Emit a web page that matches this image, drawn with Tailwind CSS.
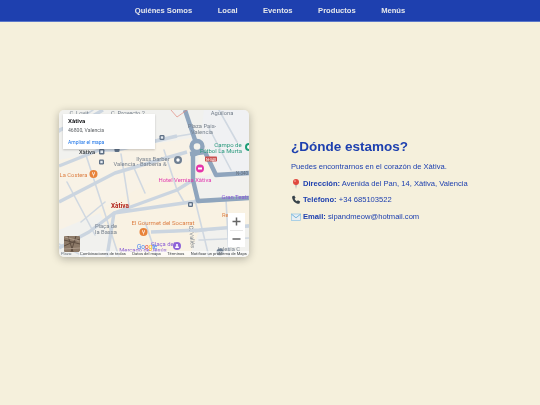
<!DOCTYPE html>
<html lang="es">
<head>
<meta charset="utf-8">
<title>Sip and Meow</title>
<script src="https://cdn.jsdelivr.net/npm/@tailwindcss/browser@4"></script>
</head>
<body class="bg-[#f5f0dc] font-['Liberation_Sans',Arial,sans-serif] text-[#1e40af] h-[405px] overflow-hidden">
  <nav class="h-[22px] bg-[#1e40af] border-b border-[#5b78c9]">
    <ul class="h-full flex justify-center items-center gap-[25.5px] text-[7.6px] font-bold text-[#e5e7eb] blur-[0.25px]">
      <li><a href="#">Quiénes Somos</a></li>
      <li><a href="#">Local</a></li>
      <li><a href="#">Eventos</a></li>
      <li><a href="#">Productos</a></li>
      <li><a href="#">Menús</a></li>
    </ul>
  </nav>

  <main class="flex items-center pl-[59px] pt-[88px]">
    <!-- map -->
    <div class="relative w-[190px] h-[147px] rounded-[5px] overflow-hidden shadow-[0_2px_8px_rgba(0,0,0,0.28)] shrink-0">
      <svg class="absolute inset-0 blur-[0.35px]" width="190" height="147" viewBox="0 0 190 147" font-family="Roboto, sans-serif">
        <rect width="190" height="147" fill="#f1f1ee"/>
        <!-- built up blocks -->
        <path d="M0 50L42 42L132 28V70L60 95L0 120Z" fill="#f8f2e6"/>
        <path d="M40 100L132 50L138 88L190 90V115L140 122L130 147H60Z" fill="#f9f2e3"/>
        <path d="M140 45L150 45L158 62L136 68Z" fill="#f9f4e9"/>
        <path d="M145 0H190V60L160 62L142 25Z" fill="#f0f1f3"/>
        <!-- minor streets -->
        <g fill="none" stroke="#d0d8e1" stroke-width="1.6" stroke-linecap="round">
          <path d="M26 42L60 147M8 72L36 125M62 44L70 95M105 40L118 80L125 92M75 58L86 83M136 90L150 147M167 89L170 147M110 122L136 120M22 112L46 92M86 112L98 147M0 22L34 0M96 30L132 24M150 18L172 60M160 0L178 32M136 122L190 115M140 130L190 128M0 134L26 147"/>
        </g>
        <!-- secondary roads -->
        <g fill="none" stroke="#cbd5e0" stroke-width="3.4" stroke-linejoin="round">
          <path d="M0 92L56 63L100 50L128 42"/>
          <path d="M0 138L30 122L55 103L132 92L190 88"/>
          <path d="M55 103L118 80L134 70"/>
          <path d="M0 56L40 40L58 40L118 26"/>
          <path d="M55 103L48 147"/>
          <path d="M92 122L140 120L190 116"/>
          <path d="M0 20L30 8L44 0"/>
        </g>
        <!-- main avenue -->
        <g fill="none" stroke="#8fa5bd" stroke-width="4.4" stroke-linejoin="round">
          <path d="M126 0L136 30"/>
          <path d="M138 43L134 45L134 70L139 91L190 88"/>
          <path d="M146 42L157 65L190 63"/>
          <circle cx="138" cy="36.500" r="5.500" fill="#f6f4ec"/>
          <path d="M131 44L146 42"/>
        </g>
        <path d="M112 0L118 7L128 0" fill="none" stroke="#e28b80" stroke-width="0.7"/>
        <!-- labels -->
        <g font-size="5.8" fill="#78828e" text-anchor="middle">
          <text x="20" y="4.500">C. Lovit</text>
          <text x="69" y="4.500">C. Proyecto 2</text>
          <text x="163" y="4.500">Aguilona</text>
          <text x="143" y="18">Plaza Pais-</text>
          <text x="143" y="24">Valencia</text>
          <text x="94" y="50.500">Ilyass Barber</text>
          <text x="81" y="56">Valencia - Barbería &amp;</text>
          <text x="47" y="118">Plaça de</text>
          <text x="47" y="123.500">la Bassa</text>
          <text x="170" y="140.500">Iglesia C</text>
          <text x="131" y="127" transform="rotate(85 131 127)">C. Vallés</text>
        </g>
        <g text-anchor="middle">
          <text x="28" y="43.500" font-size="5.800" font-weight="500" fill="#3c4043">Xàtiva</text>
          <text x="61" y="98" font-size="6.400" font-weight="700" fill="#b3261e">Xàtiva</text>
          <text x="169" y="37" font-size="6" fill="#2b9a7e">Campo de</text>
          <text x="162" y="42.800" font-size="6" fill="#2b9a7e">Fútbol La Murta</text>
          <text x="14.500" y="67" font-size="5.800" fill="#dd8146">La Costera</text>
          <text x="104" y="114.500" font-size="6" fill="#dd8146">El Gourmet del Socarrat</text>
          <text x="172" y="107" font-size="5.800" fill="#dd8146">Restau</text>
          <text x="126" y="72" font-size="5.900" fill="#e23aae">Hotel Vernisa Xàtiva</text>
          <text x="176" y="89" font-size="5.900" fill="#8b5fd6">Gran Teatr</text>
          <text x="84" y="142" font-size="5.800" fill="#8b5fd6">Mercado de Jesús</text>
          <text x="104" y="136" font-size="5.800" fill="#8b5fd6">Glaça del</text>
          <text x="189" y="64.800" font-size="4.500" fill="#67727f" text-anchor="end">N-340</text>
        </g>
        <!-- pins -->
        <g>
          <circle cx="34.500" cy="64" r="4" fill="#e8833a"/>
          <circle cx="84.500" cy="122" r="4" fill="#e8833a"/>
          <path d="M33.500 62v2.200h2v-2.200M34.500 64v2.500M83.500 120v2.200h2v-2.200M84.500 122v2.500" fill="none" stroke="#fff" stroke-width="0.6"/>
          <circle cx="141" cy="58.500" r="4" fill="#e535ab"/>
          <rect x="139" y="57.500" width="4" height="2" fill="#fff"/>
          <circle cx="118" cy="136" r="4" fill="#8e63d8"/>
          <circle cx="118" cy="135" r="1.100" fill="#fff"/>
          <path d="M116 138a2 2 0 0 1 4 0z" fill="#fff"/>
          <circle cx="119" cy="50" r="4" fill="#6f7f92"/>
          <circle cx="119" cy="50" r="1.700" fill="#fff"/>
          <circle cx="190" cy="37" r="4" fill="#1f9d78"/>
          <circle cx="190" cy="37" r="2" fill="#fff"/>
          <circle cx="161" cy="142" r="3.500" fill="#6f7f92"/>
        </g>
        <!-- transit stops -->
        <g fill="#5f7186">
          <rect x="40" y="39" width="5.400" height="5.400" rx="1.200"/>
          <rect x="40" y="49.500" width="5" height="5" rx="1.200"/>
          <rect x="100.500" y="25" width="5" height="5" rx="1.200"/>
          <rect x="55.500" y="38" width="5" height="4" rx="1.200"/>
          <rect x="129" y="92" width="5" height="5" rx="1.200"/>
        </g>
        <g fill="#e6ecf2">
          <rect x="41.400" y="40.400" width="2.600" height="2.600"/>
          <rect x="41.300" y="50.800" width="2.400" height="2.400"/>
          <rect x="101.800" y="26.300" width="2.400" height="2.400"/>
          <rect x="130.300" y="93.300" width="2.400" height="2.400"/>
        </g>
        <rect x="146" y="46.500" width="12" height="5" rx="0.800" fill="#c9504f"/>
        <text x="152" y="50.500" font-size="3.800" fill="#fff" text-anchor="middle">N-340</text>
        <!-- google word -->
        <text x="88" y="138.500" font-size="6.400" fill="#4285f4" text-anchor="middle">Go<tspan fill="#ea4335">o</tspan><tspan fill="#fbbc05">g</tspan>le</text>
        <!-- satellite thumb -->
        <rect x="5" y="126" width="16" height="16" rx="1" fill="#8d7a68"/>
        <path d="M5 130L21 134M5 136L21 129M9 126L14 142M17 126L12 142" stroke="#5e4d40" stroke-width="1"/>
        <path d="M5 139L21 138M6 127L20 131" stroke="#b7a594" stroke-width="0.800"/>
      </svg>

      <!-- info card -->
      <div class="absolute left-[4px] top-[4px] w-[92px] h-[35px] bg-white pl-[5px] pt-[4px] shadow-[0_1px_2px_rgba(0,0,0,0.2)] font-['Roboto',sans-serif] blur-[0.25px]">
        <p class="text-[6.2px] leading-[7px] font-bold text-[#202124]">Xàtiva</p>
        <p class="text-[5.1px] leading-[7px] mt-[1.5px] text-[#5b5f63]">46800, Valencia</p>
        <a href="#" class="block text-[5px] leading-[7px] mt-[5px] text-[#1a73e8]">Ampliar el mapa</a>
      </div>

      <!-- zoom control -->
      <div class="absolute left-[169px] top-[103px] w-[17px] h-[34px] bg-white flex flex-col items-center text-[#666]">
        <svg width="17" height="17" viewBox="0 0 17 17"><path d="M4.500 8.500h8M8.500 4.500v8" stroke="#666" stroke-width="1.500"/></svg>
        <span class="w-[13px] h-px bg-[#e6e6e6]"></span>
        <svg width="17" height="16" viewBox="0 0 17 16"><path d="M4.500 8h8" stroke="#666" stroke-width="1.500"/></svg>
      </div>

      <!-- attribution -->
      <div class="absolute left-0 right-0 bottom-0 h-[6px] flex items-center text-[4.1px] leading-[6px] whitespace-nowrap text-[#3c4043] font-['Roboto',sans-serif] blur-[0.2px]">
        <span class="ml-[2px] w-[18px] text-[#67727f]">Plaza:</span>
        <span class="flex flex-1 justify-between bg-white/60 pl-[1px] pr-[2px]">
          <span>Combinaciones de teclas</span>
          <span>Datos del mapa</span>
          <span>Términos</span>
          <span>Notificar un problema de Maps</span>
        </span>
      </div>
    </div>

    <!-- contact -->
    <section class="ml-[42px] -mt-[8px] blur-[0.25px]">
      <h2 class="text-[13.5px] leading-[17px] font-bold">¿Dónde estamos?</h2>
      <p class="mt-[7px] text-[7.6px] leading-[10px]">Puedes encontrarnos en el corazón de Xàtiva.</p>
      <p class="mt-[7px] text-[7.6px] leading-[10px] flex items-center">
        <svg class="mr-[2px]" width="10" height="10" viewBox="0 0 10 10"><path d="M5 10L4.200 5h1.600z" fill="#9aa0a6"/><circle cx="5" cy="3" r="3" fill="#e0483e"/><circle cx="4" cy="2.100" r="0.800" fill="#f7b5ae"/></svg>
        <span><b>Dirección:</b> Avenida del Pan, 14, Xàtiva, Valencia</span>
      </p>
      <p class="mt-[6.5px] text-[7.6px] leading-[10px] flex items-center">
        <svg class="mr-[2px]" width="10" height="10" viewBox="0 0 9 10"><path d="M.600 1.400L2.700.500l1.400 2.300-1 1c.4 1 1.300 1.900 2.300 2.400l1-1L8.700 6.600 7.800 8.800C4 9 .4 5.300.600 1.400z" fill="#37424a"/></svg>
        <span><b>Teléfono:</b> +34 685103522</span>
      </p>
      <p class="mt-[6.5px] text-[7.6px] leading-[10px] flex items-center">
        <svg class="mr-[2px]" width="10" height="10" viewBox="0 0 10 10"><rect x="0.500" y="2" width="9" height="6.500" fill="#e8eef2" stroke="#8fc4e4" stroke-width="0.700"/><path d="M0.500 2.200L5 5.800L9.500 2.200" fill="none" stroke="#5da9d6" stroke-width="0.800"/></svg>
        <span><b>Email:</b> sipandmeow@hotmail.com</span>
      </p>
    </section>
  </main>
</body>
</html>
